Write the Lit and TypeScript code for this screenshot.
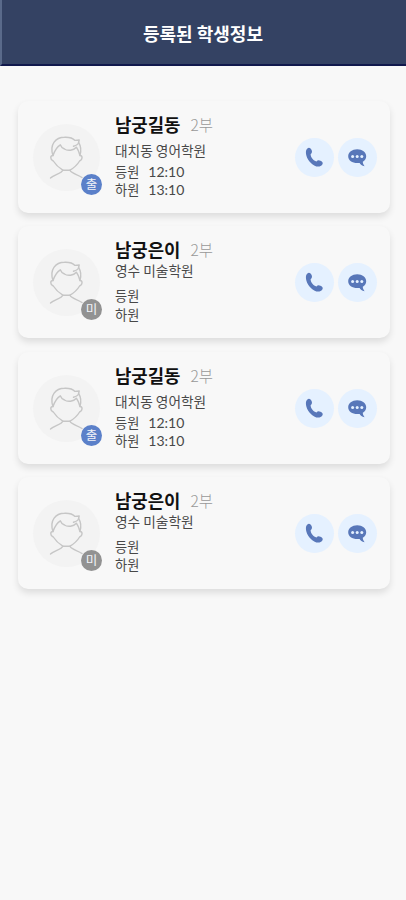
import { LitElement, html, css, svg } from "lit";
import { customElement, property } from "lit/decorators.js";
import { classMap } from "lit/directives/class-map.js";

interface Student {
  name: string;
  part: string;
  academy: string;
  arrive: string;
  leave: string;
  present: boolean;
}

const STUDENTS: Student[] = [
  { name: "남궁길동", part: "2부", academy: "대치동 영어학원", arrive: "12:10", leave: "13:10", present: true },
  { name: "남궁은이", part: "2부", academy: "영수 미술학원", arrive: "", leave: "", present: false },
  { name: "남궁길동", part: "2부", academy: "대치동 영어학원", arrive: "12:10", leave: "13:10", present: true },
  { name: "남궁은이", part: "2부", academy: "영수 미술학원", arrive: "", leave: "", present: false },
];

const person = svg`
  <path d="M17.5 54C21 50.5 28.5 49.5 29.8 46.2H37C38.3 49.5 45 50.5 49 53.5" />
  <path d="M20 31.5C17.2 31.5 16.8 35.5 20.3 37C22.5 40.5 26 43.8 29.8 46.2M47 31.5C49.6 31.5 50 35.5 46.6 37C44.5 40.5 41 43.8 37 46.2" />
  <path d="M20 31.5C16.2 21 22.5 13.3 31.5 13.3C36 13.1 40 14.3 42 16.4L46.2 16L45.6 18.5C48.2 22.5 48.2 27 47 31.5C46.2 28.5 45.2 25.5 43.4 23.2C40.5 26.6 34.5 27.2 31.5 25C29.5 24.3 28 22.8 27.3 20.8C23.6 23 21.5 27 20 31.5Z" />
  <path d="M40.5 22.2C43.2 21.5 45.3 20.5 45.6 18.5" />
`;

@customElement("student-card")
export class StudentCard extends LitElement {
  @property({ attribute: false }) student!: Student;

  static styles = css`
    :host {
      display: flex;
      box-sizing: border-box;
      height: 112px;
      padding-left: 15px;
      padding-right: 13px;
      border-radius: 10px;
      background: #f8f8f8;
      box-shadow: 0 4px 7px rgba(0, 0, 0, 0.11);
      color: #484848;
    }
    .avatar {
      position: relative;
      width: 67px;
      height: 67px;
      margin-top: 23px;
      border-radius: 50%;
      background: #f3f3f3;
    }
    .person {
      display: block;
      width: 67px;
      height: 67px;
      fill: none;
      stroke: #c6c6c6;
      stroke-width: 1.4;
      stroke-linejoin: round;
      stroke-linecap: round;
    }
    .badge {
      position: absolute;
      right: -2px;
      bottom: -4px;
      width: 21px;
      height: 21px;
      border-radius: 50%;
      background: #929292;
      color: #f3f4f8;
      font-size: 12.5px;
      line-height: 20px;
      text-align: center;
    }
    .badge.present {
      background: #5b80c9;
    }
    .info {
      flex: 1;
      margin-left: 15px;
      padding-top: 11px;
      white-space: nowrap;
    }
    .head {
      display: flex;
      align-items: center;
      gap: 10px;
      height: 24px;
    }
    .name {
      color: #111;
      font-size: 17.8px;
      font-weight: 700;
    }
    .part {
      color: #999;
      font-size: 15.5px;
      font-weight: 300;
    }
    .academy {
      height: 20px;
      margin-top: 4px;
      margin-bottom: 3px;
      font-size: 13.7px;
      line-height: 20px;
    }
    .academy.raised {
      margin-top: -1px;
      margin-bottom: 7px;
    }
    .row {
      display: flex;
      align-items: center;
      gap: 9px;
      height: 18.3px;
      font-size: 13.2px;
      line-height: 18px;
    }
    .time {
      font-family: Lato, "Noto Sans CJK KR", sans-serif;
      font-size: 14px;
    }
    .actions {
      display: flex;
      gap: 4px;
      margin-top: 37px;
    }
    .action {
      display: block;
      width: 39px;
      height: 39px;
      border-radius: 50%;
      background: #e5f1ff;
    }
    .glyph {
      display: block;
      width: 39px;
      height: 39px;
      fill: #5877b9;
    }
    .dot {
      fill: #e5f1ff;
    }
  `;

  render() {
    const s = this.student;
    return html`
      <div class="avatar">
        <svg class="person" viewBox="0 0 67 67">${person}</svg>
        <span class=${classMap({ badge: true, present: s.present })}>${s.present ? "출" : "미"}</span>
      </div>
      <div class="info">
        <div class="head"><span class="name">${s.name}</span><span class="part">${s.part}</span></div>
        <div class=${classMap({ academy: true, raised: !s.present })}>${s.academy}</div>
        <div class="row"><span>등원</span><span class="time">${s.arrive}</span></div>
        <div class="row"><span>하원</span><span class="time">${s.leave}</span></div>
      </div>
      <div class="actions">
        <span class="action">
          <svg class="glyph" viewBox="0 0 39 39">
            <path d="M12.4 10.4C14 9 15.9 10 16.7 12.3C17.4 14.2 16.8 15.3 15.6 16.3C15.8 19.6 18.4 22.7 21.5 23.4C22.5 22.1 23.8 21.9 25.5 22.8C27.6 23.9 28.4 25.1 27.2 26.8C25.6 29 22.4 29.2 19.2 27.4C14.1 24.5 10.8 19 10.9 14C11 12.3 11.4 11.2 12.4 10.4Z" />
          </svg>
        </span>
        <span class="action">
          <svg class="glyph" viewBox="0 0 39 39">
            <path d="M19.2 11.3C24.3 11.3 28.2 14.3 28.2 18.2C28.2 20.5 26.8 22.5 24.8 23.8C24.7 25.3 25.5 26.8 26.6 28.2C24 27.7 22.3 26.4 21.6 24.9C15.2 25.8 10.2 22.7 10.2 18.2C10.2 14.3 14.1 11.3 19.2 11.3Z" />
            <circle class="dot" cx="14.6" cy="18.4" r="1.5" />
            <circle class="dot" cx="19.2" cy="18.4" r="1.5" />
            <circle class="dot" cx="23.8" cy="18.4" r="1.5" />
          </svg>
        </span>
      </div>
    `;
  }
}

@customElement("app-root")
export class AppRoot extends LitElement {
  static styles = css`
    :host {
      display: block;
      box-sizing: border-box;
      min-height: 900px;
      background: #f8f8f8;
      font-family: "Noto Sans CJK KR", sans-serif;
    }
    .bar {
      display: flex;
      align-items: center;
      justify-content: center;
      box-sizing: border-box;
      height: 66px;
      border-left: 2px solid #5a6a8a;
      border-bottom: 2px solid #10184c;
      background: #344263;
      color: #fff;
      font-size: 18px;
      font-weight: 700;
      line-height: 26px;
    }
    .title {
      margin-top: 2px;
      margin-right: 2px;
    }
    .list {
      display: flex;
      flex-direction: column;
      gap: 13.3px;
      padding: 35px 16px 0 18px;
    }
  `;

  render() {
    return html`
      <header class="bar"><span class="title">등록된 학생정보</span></header>
      <main class="list">
        ${STUDENTS.map((s) => html`<student-card .student=${s}></student-card>`)}
      </main>
    `;
  }
}
